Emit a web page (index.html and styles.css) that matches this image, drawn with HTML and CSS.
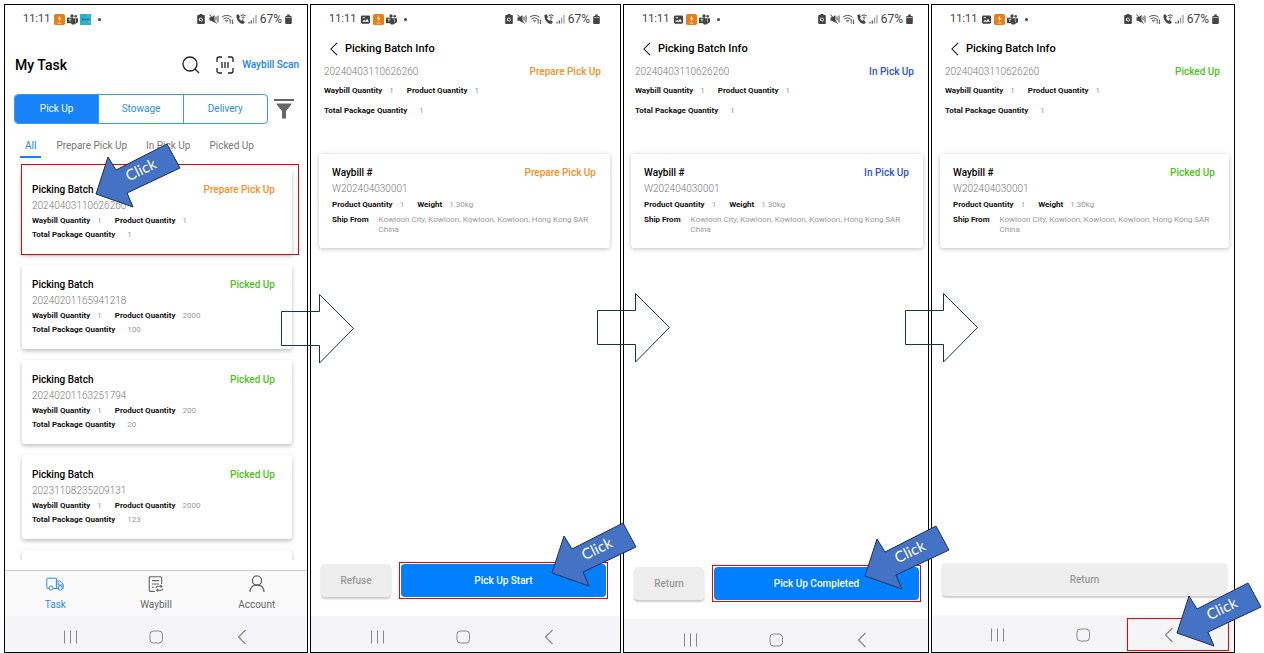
FILE: index.html
```
<!DOCTYPE html>
<html lang="en">
    <head>
        <meta charset="utf-8">
        <title>Picking batch - pick up steps</title>
        <link rel="stylesheet" href="styles.css">
    </head>
    <body>

        <svg class="sprite" aria-hidden="true">
            <symbol id="i_power" viewBox="0 0 12 12">
                <rect width="12" height="12" rx="2" fill="#f07c10"/>
                <path d="M6.8 1.6 4 5.4h1.8L5.2 8.4 8.2 4.6H6.3z" fill="#fff"/>
                <path d="M4 10h4" stroke="#fbd0a0"/>
            </symbol>
            <symbol id="i_teams" viewBox="0 0 12 12">
                <circle cx="5.500" cy="2.200" r="1.800"/>
                <circle cx="9.500" cy="2.400" r="1.400"/>
                <path d="M4 4.500h8v3.700a2 2 0 0 1-2 1.800L8 11.400H5.400L4 9.600z"/>
                <path d="M0 4h6.500v6H0z"/>
                <path d="M1.700 5.700h3M3.200 5.700v2.800" stroke="#fff" stroke-width=".8" fill="none"/>
                <path d="M9.200 5v4" stroke="#fff" stroke-width=".6" fill="none"/>
            </symbol>
            <symbol id="i_cyan" viewBox="0 0 12 12">
                <rect width="12" height="12" fill="#22b4d4"/>
                <path d="M2 6h2M5 6h2M8 6h1.500" stroke="#0b5d86" stroke-width="1.500"/>
                <path d="M8 2h2M9 9h2" stroke="#e8c14a"/>
                <path d="M10.500 4.500v2" stroke="#d8543f"/>
            </symbol>
            <symbol id="i_photo" viewBox="0 0 12 12">
                <rect x="1" y="1.500" width="10" height="9" rx="1.500"/>
                <path d="m2.500 8.500 2-2.300 1.500 1.300 1.700-2.200 2 3.200z" fill="#fff"/>
                <path d="M3 4h2.500" stroke="#fff"/>
            </symbol>
            <symbol id="i_saver" viewBox="0 0 8 12">
                <path d="M2.500 1h3v1H7a.8.8 0 0 1 .8.8v7.400a.8.8 0 0 1-.8.8H1a.8.8 0 0 1-.8-.8V2.800A.8.8 0 0 1 1 2h1.500z"/>
                <path d="M2.500 7.500a1.600 1.600 0 1 1 1.500.8M2.500 5.500v2h1.500" stroke="#fff" stroke-width=".8" fill="none"/>
            </symbol>
            <symbol id="i_mute" viewBox="0 0 10 12">
                <path d="M.5 4.300h2L5.500 2v8l-3-2.300h-2z"/>
                <path d="m.5 1.500 7 9M7 3.500v4M9 2.500v7" stroke="#444" fill="none"/>
            </symbol>
            <symbol id="i_wifi" viewBox="0 0 13 12">
                <path d="M.8 4.200a7.500 7.500 0 0 1 9.700 0M2.400 6a5 5 0 0 1 6.200 0M4 7.900a2.400 2.400 0 0 1 3 0" stroke="#555" fill="none"/>
                <path d="m5.500 9.600-1-1h2z"/>
                <path d="M9.200 6.500v4.200M8.200 7.500l1-1 1 1M11.500 6.500v4.200M10.500 9.700l1 1 1-1" stroke="#444" stroke-width=".8" fill="none"/>
            </symbol>
            <symbol id="i_call" viewBox="0 0 10 12">
                <path d="M.5 2 2.600 1.200l1.400 2.900-1 1c.5 1.300 1.200 2.100 2.400 2.700l1.100-.9L8.900 9 7.700 10.700C3.800 11.300-.1 6.500.5 2z"/>
                <path d="M4.600 2.800a4 4 0 0 1 5 0M5.700 4.500a2.300 2.300 0 0 1 2.800 0" stroke="#444" fill="none"/>
                <circle cx="7.100" cy="6" r=".7"/>
            </symbol>
            <symbol id="i_signal" viewBox="0 0 9 12">
                <path d="M1 9v1.500M3.300 7.500v3" stroke="#444" stroke-width="1.200"/>
                <path d="M5.600 4.500v6M8 2v8.500" stroke="#999" stroke-width="1.200"/>
            </symbol>
            <symbol id="i_battery" viewBox="0 0 7 12">
                <path d="M2.200 1.500h2.600v1.400h1a1 1 0 0 1 1 1V10a1 1 0 0 1-1 1H1.200a1 1 0 0 1-1-1V3.900a1 1 0 0 1 1-1h1z"/>
                <path d="M.6 4.500h5.800" stroke="#aaa"/>
            </symbol>
            <symbol id="i_search" viewBox="0 0 18 18">
                <circle cx="8" cy="8" r="7" fill="none" stroke="#222" stroke-width="1.300"/>
                <path d="m13 13 4 4" stroke="#222" stroke-width="1.300"/>
            </symbol>
            <symbol id="i_scan" viewBox="0 0 18 18">
                <path d="M1 6V3a2 2 0 0 1 2-2h3M12 1h3a2 2 0 0 1 2 2v3M17 12v3a2 2 0 0 1-2 2h-3M6 17H3a2 2 0 0 1-2-2v-3M6 6v6M9 6v6M12 6v6" fill="none" stroke="#222" stroke-width="1.300"/>
            </symbol>
            <symbol id="i_filter" viewBox="0 0 20 20">
                <path d="M0 0h20v2H0zM3 4.500h14v1.500l-5 6v7.500H8V12L3 6z" fill="#666"/>
            </symbol>
            <symbol id="i_back" viewBox="0 0 10 16">
                <path d="M8.500 1 1.500 8l7 7" fill="none" stroke="currentColor" stroke-width="1.200"/>
            </symbol>
            <symbol id="i_recent" viewBox="0 0 16 16">
                <path d="M2.500 1.500v13M8.500 1.500v13M14.500 1.500v13" stroke="currentColor"/>
            </symbol>
            <symbol id="i_home" viewBox="0 0 16 16">
                <rect x="2" y="2" width="12.500" height="12" rx="3.500" fill="none" stroke="currentColor"/>
            </symbol>
            <symbol id="i_truck" viewBox="0 0 18 14">
                <path d="M3 11.500H1.600a.8.8 0 0 1-.8-.8V2a.8.8 0 0 1 .8-.8h8.800v10.300H7.200M10.400 4h3.400l3.400 3.400v4.100h-.8M12.400 11.500h-2M12 5v3h5" fill="none" stroke="currentColor"/>
                <circle cx="5" cy="11" r="2.100" fill="none" stroke="currentColor"/>
                <circle cx="14.300" cy="11" r="2.100" fill="none" stroke="currentColor"/>
            </symbol>
            <symbol id="i_waybill" viewBox="0 0 14 16">
                <path d="M6 14.500H2a1 1 0 0 1-1-1v-11a1 1 0 0 1 1-1h9a1 1 0 0 1 1 1V8M3.500 5h6M3.500 8h6M3.500 11H5M7 11.500a1.500 1.500 0 0 1 1.500-1.500h3.800M11 8.800l1.400 1.200L11 11.200M13 12a1.500 1.500 0 0 1-1.500 1.500H7.600M9 12.300l-1.400 1.200L9 14.700" fill="none" stroke="currentColor"/>
            </symbol>
            <symbol id="i_user" viewBox="0 0 16 18">
                <circle cx="8" cy="5.500" r="4.600" fill="none" stroke="currentColor" stroke-width="1.300"/>
                <path d="M1 17c0-4.500 3-7 7-7s7 2.500 7 7" fill="none" stroke="currentColor" stroke-width="1.300"/>
            </symbol>
            <symbol id="i_click" viewBox="0 0 87 67">
                <path d="M72 2 85 26 32 51 38 65 1 52 13 15 21 28z" fill="#4472c4" stroke="#1d2f52"/>
                <text x="46" y="33" text-anchor="middle" transform="rotate(-26 46 28)">Click</text>
            </symbol>
            <symbol id="i_next" viewBox="0 0 74 70">
                <path d="M.5 17.500h38V.5l34 34-34 34.500V51.500H.5z" fill="none" stroke="#1d2f52"/>
            </symbol>
        </svg>

        <main class="steps">

            <!-- task list -->
            <section class="phone">
                <div class="status_bar">
                    <span>11:11</span>
                    <svg class="app"><use href="#i_power"/></svg>
                    <svg class="app"><use href="#i_teams"/></svg>
                    <svg class="app"><use href="#i_cyan"/></svg>
                    <i class="dot"></i>
                    <div class="system">
                        <svg class="w8"><use href="#i_saver"/></svg>
                        <svg class="w10"><use href="#i_mute"/></svg>
                        <svg class="w13"><use href="#i_wifi"/></svg>
                        <svg class="w10"><use href="#i_call"/></svg>
                        <svg class="w9"><use href="#i_signal"/></svg>
                        <span>67%</span>
                        <svg class="w7"><use href="#i_battery"/></svg>
                    </div>
                </div>
                <header class="list_header">
                    <h1>My Task</h1>
                    <button type="button" class="icon_button" aria-label="Search"><svg><use href="#i_search"/></svg></button>
                    <button type="button" class="scan_button"><svg><use href="#i_scan"/></svg>Waybill Scan</button>
                </header>
                <div class="kind_row">
                    <div class="kinds">
                        <button type="button" class="active">Pick Up</button>
                        <button type="button">Stowage</button>
                        <button type="button">Delivery</button>
                    </div>
                    <button type="button" class="filter_button" aria-label="Filter"><svg><use href="#i_filter"/></svg></button>
                </div>
                <nav class="filters">
                    <a href="#" class="active">All</a>
                    <a href="#">Prepare Pick Up</a>
                    <a href="#">In Pick Up</a>
                    <a href="#">Picked Up</a>
                </nav>
                <div class="batches">
                    <article class="batch marked">
                        <div class="line"><h2>Picking Batch</h2><span class="state prepare">Prepare Pick Up</span></div>
                        <p class="number">20240403110626260</p>
                        <p class="facts"><b>Waybill Quantity</b><span>1</span><b>Product Quantity</b><span>1</span></p>
                        <p class="facts total"><b>Total Package Quantity</b><span>1</span></p>
                    </article>
                    <article class="batch">
                        <div class="line"><h2>Picking Batch</h2><span class="state picked">Picked Up</span></div>
                        <p class="number">20240201165941218</p>
                        <p class="facts"><b>Waybill Quantity</b><span>1</span><b>Product Quantity</b><span>2000</span></p>
                        <p class="facts total"><b>Total Package Quantity</b><span>100</span></p>
                    </article>
                    <article class="batch">
                        <div class="line"><h2>Picking Batch</h2><span class="state picked">Picked Up</span></div>
                        <p class="number">20240201163251794</p>
                        <p class="facts"><b>Waybill Quantity</b><span>1</span><b>Product Quantity</b><span>200</span></p>
                        <p class="facts total"><b>Total Package Quantity</b><span>20</span></p>
                    </article>
                    <article class="batch">
                        <div class="line"><h2>Picking Batch</h2><span class="state picked">Picked Up</span></div>
                        <p class="number">20231108235209131</p>
                        <p class="facts"><b>Waybill Quantity</b><span>1</span><b>Product Quantity</b><span>2000</span></p>
                        <p class="facts total"><b>Total Package Quantity</b><span>123</span></p>
                    </article>
                    <article class="batch"></article>
                </div>
                <nav class="tab_bar">
                    <a href="#" class="active"><svg><use href="#i_truck"/></svg>Task</a>
                    <a href="#"><svg><use href="#i_waybill"/></svg>Waybill</a>
                    <a href="#"><svg><use href="#i_user"/></svg>Account</a>
                </nav>
                <div class="system_nav">
                    <button type="button" aria-label="Recent"><svg><use href="#i_recent"/></svg></button>
                    <button type="button" aria-label="Home"><svg><use href="#i_home"/></svg></button>
                    <button type="button" aria-label="Back"><svg><use href="#i_back"/></svg></button>
                </div>
                <svg class="click on_card"><use href="#i_click"/></svg>
                <svg class="next"><use href="#i_next"/></svg>
            </section>

            <!-- prepare pick up -->
            <section class="phone info wide">
                <div class="status_bar">
                    <span>11:11</span>
                    <svg class="app"><use href="#i_photo"/></svg>
                    <svg class="app"><use href="#i_power"/></svg>
                    <svg class="app"><use href="#i_teams"/></svg>
                    <i class="dot"></i>
                    <div class="system">
                        <svg class="w8"><use href="#i_saver"/></svg>
                        <svg class="w10"><use href="#i_mute"/></svg>
                        <svg class="w13"><use href="#i_wifi"/></svg>
                        <svg class="w10"><use href="#i_call"/></svg>
                        <svg class="w9"><use href="#i_signal"/></svg>
                        <span>67%</span>
                        <svg class="w7"><use href="#i_battery"/></svg>
                    </div>
                </div>
                <header class="info_header">
                    <button type="button" aria-label="Back"><svg><use href="#i_back"/></svg></button>
                    <h1>Picking Batch Info</h1>
                </header>
                <div class="summary">
                    <div class="line"><p class="number">20240403110626260</p><span class="state prepare">Prepare Pick Up</span></div>
                    <p class="facts"><b>Waybill Quantity</b><span>1</span><b>Product Quantity</b><span>1</span></p>
                    <p class="facts total"><b>Total Package Quantity</b><span>1</span></p>
                </div>
                <article class="waybill">
                    <div class="line"><h2>Waybill #</h2><span class="state prepare">Prepare Pick Up</span></div>
                    <p class="number">W202404030001</p>
                    <p class="facts"><b>Product Quantity</b><span>1</span><b>Weight</b><span>1.30kg</span></p>
                    <p class="facts ship"><b>Ship From</b><span>Kowloon City, Kowloon, Kowloon, Kowloon, Hong Kong SAR China</span></p>
                </article>
                <div class="actions">
                    <button type="button" class="plain">Refuse</button>
                    <div class="target">
                        <button type="button" class="primary">Pick Up Start</button>
                        <svg class="click"><use href="#i_click"/></svg>
                    </div>
                </div>
                <div class="system_nav">
                    <button type="button" aria-label="Recent"><svg><use href="#i_recent"/></svg></button>
                    <button type="button" aria-label="Home"><svg><use href="#i_home"/></svg></button>
                    <button type="button" aria-label="Back"><svg><use href="#i_back"/></svg></button>
                </div>
                <svg class="next"><use href="#i_next"/></svg>
            </section>

            <!-- in pick up -->
            <section class="phone info low_nav">
                <div class="status_bar">
                    <span>11:11</span>
                    <svg class="app"><use href="#i_photo"/></svg>
                    <svg class="app"><use href="#i_power"/></svg>
                    <svg class="app"><use href="#i_teams"/></svg>
                    <i class="dot"></i>
                    <div class="system">
                        <svg class="w8"><use href="#i_saver"/></svg>
                        <svg class="w10"><use href="#i_mute"/></svg>
                        <svg class="w13"><use href="#i_wifi"/></svg>
                        <svg class="w10"><use href="#i_call"/></svg>
                        <svg class="w9"><use href="#i_signal"/></svg>
                        <span>67%</span>
                        <svg class="w7"><use href="#i_battery"/></svg>
                    </div>
                </div>
                <header class="info_header">
                    <button type="button" aria-label="Back"><svg><use href="#i_back"/></svg></button>
                    <h1>Picking Batch Info</h1>
                </header>
                <div class="summary">
                    <div class="line"><p class="number">20240403110626260</p><span class="state progress">In Pick Up</span></div>
                    <p class="facts"><b>Waybill Quantity</b><span>1</span><b>Product Quantity</b><span>1</span></p>
                    <p class="facts total"><b>Total Package Quantity</b><span>1</span></p>
                </div>
                <article class="waybill">
                    <div class="line"><h2>Waybill #</h2><span class="state progress">In Pick Up</span></div>
                    <p class="number">W202404030001</p>
                    <p class="facts"><b>Product Quantity</b><span>1</span><b>Weight</b><span>1.30kg</span></p>
                    <p class="facts ship"><b>Ship From</b><span>Kowloon City, Kowloon, Kowloon, Kowloon, Hong Kong SAR China</span></p>
                </article>
                <div class="actions">
                    <button type="button" class="plain">Return</button>
                    <div class="target">
                        <button type="button" class="primary">Pick Up Completed</button>
                        <svg class="click"><use href="#i_click"/></svg>
                    </div>
                </div>
                <div class="system_nav">
                    <button type="button" aria-label="Recent"><svg><use href="#i_recent"/></svg></button>
                    <button type="button" aria-label="Home"><svg><use href="#i_home"/></svg></button>
                    <button type="button" aria-label="Back"><svg><use href="#i_back"/></svg></button>
                </div>
                <svg class="next"><use href="#i_next"/></svg>
            </section>

            <!-- picked up -->
            <section class="phone info high_nav">
                <div class="status_bar">
                    <span>11:11</span>
                    <svg class="app"><use href="#i_photo"/></svg>
                    <svg class="app"><use href="#i_power"/></svg>
                    <svg class="app"><use href="#i_teams"/></svg>
                    <i class="dot"></i>
                    <div class="system">
                        <svg class="w8"><use href="#i_saver"/></svg>
                        <svg class="w10"><use href="#i_mute"/></svg>
                        <svg class="w13"><use href="#i_wifi"/></svg>
                        <svg class="w10"><use href="#i_call"/></svg>
                        <svg class="w9"><use href="#i_signal"/></svg>
                        <span>67%</span>
                        <svg class="w7"><use href="#i_battery"/></svg>
                    </div>
                </div>
                <header class="info_header">
                    <button type="button" aria-label="Back"><svg><use href="#i_back"/></svg></button>
                    <h1>Picking Batch Info</h1>
                </header>
                <div class="summary">
                    <div class="line"><p class="number">20240403110626260</p><span class="state picked">Picked Up</span></div>
                    <p class="facts"><b>Waybill Quantity</b><span>1</span><b>Product Quantity</b><span>1</span></p>
                    <p class="facts total"><b>Total Package Quantity</b><span>1</span></p>
                </div>
                <article class="waybill">
                    <div class="line"><h2>Waybill #</h2><span class="state picked">Picked Up</span></div>
                    <p class="number">W202404030001</p>
                    <p class="facts"><b>Product Quantity</b><span>1</span><b>Weight</b><span>1.30kg</span></p>
                    <p class="facts ship"><b>Ship From</b><span>Kowloon City, Kowloon, Kowloon, Kowloon, Hong Kong SAR China</span></p>
                </article>
                <div class="actions">
                    <button type="button" class="plain full">Return</button>
                </div>
                <div class="system_nav">
                    <button type="button" aria-label="Recent"><svg><use href="#i_recent"/></svg></button>
                    <button type="button" aria-label="Home"><svg><use href="#i_home"/></svg></button>
                    <button type="button" aria-label="Back"><svg><use href="#i_back"/></svg></button>
                    <div class="nav_mark"><svg class="click"><use href="#i_click"/></svg></div>
                </div>
            </section>

        </main>
    </body>
</html>
```
FILE: styles.css
```
* {
    box-sizing: border-box;
}

body {
    margin: 0;
    background: #fff;
    font-family: Roboto, "Liberation Sans", sans-serif;
    font-size: 10px;
    line-height: 16px;
    color: #111;
}

h1, h2, p {
    margin: 0;
}

button {
    padding: 0;
    border: none;
    background: none;
    font: inherit;
    color: inherit;
}

a {
    color: inherit;
    text-decoration: none;
}

svg {
    display: block;
    flex: none;
}

.sprite {
    display: none;
}

.steps {
    display: grid;
    grid-template-columns: 304fr 311fr 306fr 304fr;
    column-gap: 2px;
    min-height: 100vh;
    padding: 4px 29px 0 4px;
}

.phone {
    position: relative;
    display: flex;
    flex-direction: column;
    min-width: 0;
    border: 1px solid #000;
    background: #fff;
}

/* status bar */

.status_bar {
    display: flex;
    align-items: center;
    gap: 2px;
    height: 28px;
    padding: 0 15px 0 18px;
    font-size: 11px;
    color: #444;
    fill: #444;
}

.status_bar .app {
    width: 11px;
    height: 11px;
}

.status_bar span + .app {
    margin-left: 2px;
}

.dot {
    width: 3px;
    height: 3px;
    margin-left: 5px;
    border-radius: 50%;
    background: #444;
}

.system {
    display: flex;
    align-items: center;
    gap: 2px;
    margin-left: auto;
}

.system svg {
    height: 12px;
}

.system span {
    margin: 0 1px;
    font-size: 12px;
}

.w7 { width: 7px; }
.w8 { width: 8px; margin-right: 2px; }
.w9 { width: 9px; }
.w10 { width: 10px; }
.w13 { width: 13px; }

.wide .status_bar {
    padding-right: 20px;
}

/* task list */

.list_header {
    display: flex;
    align-items: center;
    height: 61px;
    padding: 3px 8px 0 10px;
}

.list_header h1 {
    margin-right: auto;
    font-size: 14px;
    font-weight: 500;
    color: #000;
}

.icon_button svg, .scan_button svg {
    width: 18px;
    height: 18px;
}

.scan_button {
    display: flex;
    align-items: center;
    gap: 8px;
    margin-left: 16px;
    font-weight: 500;
    color: #1683fb;
}

.kind_row {
    display: flex;
    align-items: center;
    gap: 6px;
    padding: 0 13px 0 9px;
}

.kinds {
    display: flex;
    flex: 1;
    height: 30px;
    border: 1px solid #3f96ee;
    border-radius: 4px;
    overflow: hidden;
}

.kinds button {
    flex: 1;
    color: #2d8bea;
}

.kinds button + button {
    border-left: 1px solid #3f96ee;
}

.kinds .active {
    background: #1683fb;
    color: #fff;
}

.filter_button svg {
    width: 20px;
    height: 20px;
}

.filters {
    display: flex;
    gap: 19px;
    height: 34px;
    padding: 12px 0 0 15px;
    line-height: 20px;
    color: #777;
}

.filters .active {
    height: 22px;
    margin-right: -4px;
    padding: 0 5px;
    border-bottom: 2px solid #1683fb;
    color: #1683fb;
}

.batches {
    flex: 1 0 0;
    display: flex;
    flex-direction: column;
    gap: 11px;
    min-height: 0;
    margin-bottom: 10px;
    padding: 12px 15px 0 17px;
    overflow: hidden;
}

.batch {
    position: relative;
    flex: none;
    height: 84px;
    padding: 12px 17px 0 10px;
    border-radius: 3px;
    box-shadow: 0 2px 4px rgba(0, 0, 0, 0.25);
}

.marked::after {
    content: "";
    position: absolute;
    inset: -6px -7px -1px -1px;
    border: 1px solid #f00000;
}

.line {
    display: flex;
    justify-content: space-between;
}

h2 {
    font-size: 10px;
    font-weight: 500;
    color: #000;
}

.number {
    font-weight: 300;
    color: #777;
}

.state {
    font-weight: 500;
}

.prepare { color: #f7901e; }
.progress { color: #2d50e0; }
.picked { color: #4bc417; }

.facts {
    display: flex;
    font-size: 8px;
    line-height: 14px;
    color: #999;
}

.facts b {
    margin-right: 7px;
    font-weight: 700;
    color: #111;
}

.facts span {
    margin-right: 13px;
}

.total b {
    margin-right: 12px;
}

.tab_bar {
    display: flex;
    height: 46px;
    border-top: 1px solid #ccc;
    background: #fafafa;
    color: #666;
}

.tab_bar a {
    flex: 1;
    display: flex;
    flex-direction: column;
    align-items: center;
    gap: 4px;
    padding-top: 4px;
}

.tab_bar svg {
    width: 18px;
    height: 18px;
}

.tab_bar .active {
    color: #2d8bea;
}

/* batch info */

.info_header {
    display: flex;
    align-items: center;
    gap: 6px;
    height: 31px;
    padding-left: 18px;
}

.info_header svg {
    width: 10px;
    height: 14px;
}

.info_header h1 {
    font-size: 11px;
    font-weight: 500;
    color: #000;
}

.summary {
    height: 90px;
    margin: 0 14px 0 13px;
}

.summary .facts {
    margin-top: 4px;
}

.summary .total {
    margin-top: 6px;
}

.waybill {
    height: 94px;
    margin: 0 5px 0 8px;
    padding: 11px 14px 0 13px;
    border-radius: 3px;
    box-shadow: 0 1px 4px rgba(0, 0, 0, 0.25);
}

.waybill .facts {
    line-height: 15px;
}

.waybill .ship {
    margin-top: 3px;
    line-height: 10px;
}

.ship b {
    flex: none;
    margin-right: 10px;
}

.ship span {
    margin-right: 0;
}

.actions {
    display: flex;
    align-items: center;
    gap: 8px;
    margin: auto 7px 17px 10px;
}

.plain, .primary {
    height: 33px;
    border-radius: 4px;
    font-weight: 500;
}

.plain {
    width: 70px;
    background: #eee;
    box-shadow: 0 2px 2px rgba(0, 0, 0, 0.2);
    color: #999;
}

.full {
    flex: 1;
    margin-bottom: 2px;
}

.target {
    position: relative;
    flex: 1;
    padding: 1px;
    border: 1px solid #f00000;
}

.primary {
    display: block;
    width: 100%;
    background: #0080ff;
    color: #fff;
}

.wide .summary { margin-right: 19px; }
.wide .waybill { margin-right: 10px; }
.wide .actions { margin-right: 12px; }
.low_nav .summary { margin-left: 11px; }
.low_nav .waybill { margin-left: 7px; }

/* android navigation */

.system_nav {
    position: relative;
    display: flex;
    justify-content: center;
    gap: 70px;
    height: 36px;
    padding-top: 13px;
    background: #f5f5f7;
    color: #888;
}

.system_nav button {
    width: 16px;
    height: 16px;
}

.system_nav button svg {
    width: 16px;
    height: 16px;
}

.wide .system_nav { padding-right: 6px; }
.low_nav .system_nav { height: 33px; }
.high_nav .system_nav { height: 37px; padding-top: 12px; }

.nav_mark {
    position: absolute;
    top: 3px;
    right: 5px;
    bottom: 1px;
    width: 102px;
    border: 1px solid #f00000;
}

/* arrows drawn over the screens */

.click {
    position: absolute;
    top: -42px;
    right: -31px;
    z-index: 2;
    width: 87px;
    height: 67px;
    font-family: Lato, "Open Sans", sans-serif;
    font-size: 15px;
    fill: #fff;
}

.on_card {
    top: 137px;
    right: auto;
    left: 90px;
}

.nav_mark .click {
    top: -38px;
    right: -35px;
}

.next {
    position: absolute;
    top: 289px;
    right: -48px;
    z-index: 1;
    width: 74px;
    height: 70px;
}

.info .next {
    top: 288px;
    right: -51px;
}
```
